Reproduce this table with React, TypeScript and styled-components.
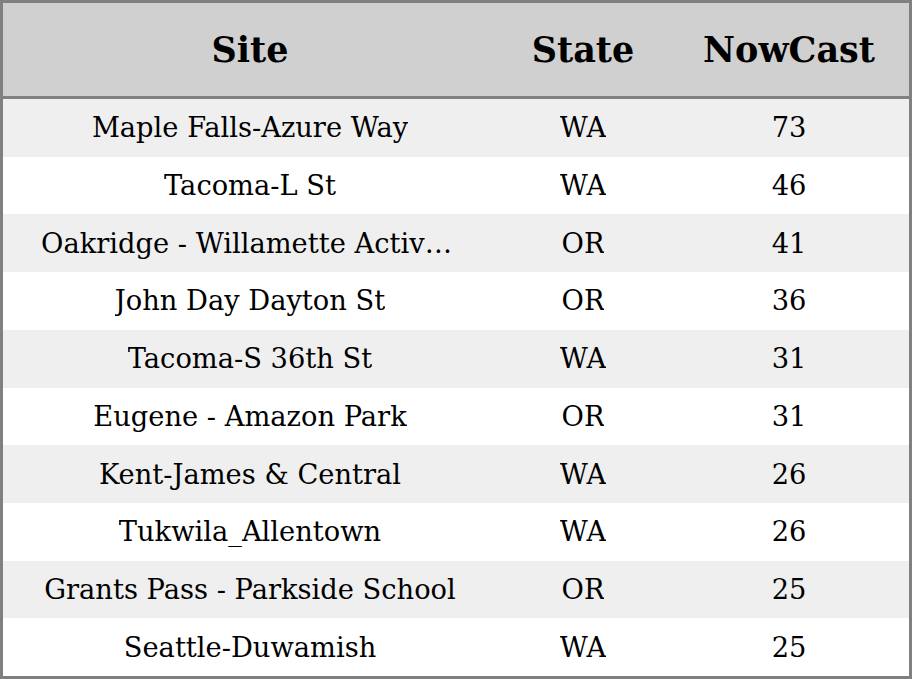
import * as React from "react";
import styled, { createGlobalStyle } from "styled-components";

const GlobalStyle = createGlobalStyle`
  html, body {
    margin: 0;
    padding: 0;
    background: #ffffff;
  }
  * {
    box-sizing: border-box;
  }
`;

const Table = styled.div`
  width: 912px;
  height: 679px;
  border: 3px solid #808080;
  display: grid;
  grid-template-columns: 494px 172px 1fr;
  grid-template-rows: 96px repeat(10, 1fr);
  font-family: "DejaVu Serif", "Liberation Serif", serif;
  color: #000;
  overflow: hidden;
`;

const HeadCell = styled.div`
  background: #d0d0d0;
  border-bottom: 3px solid #808080;
  font-weight: bold;
  font-size: 35px;
  display: flex;
  align-items: center;
  justify-content: center;
`;

const Cell = styled.div<{ striped: boolean; pad?: number }>`
  background: ${p => (p.striped ? "#efefef" : "#ffffff")};
  font-size: 27.3px;
  display: flex;
  align-items: center;
  justify-content: center;
  padding: 0 ${p => (p.pad ?? 12)}px;
  min-width: 0;
`;

const CellText = styled.span`
  white-space: nowrap;
  overflow: hidden;
  text-overflow: ellipsis;
  max-width: 100%;
`;

interface IRow {
  site: string;
  state: string;
  nowcast: number;
}

const rows: IRow[] = [
  { site: "Maple Falls-Azure Way", state: "WA", nowcast: 73 },
  { site: "Tacoma-L St", state: "WA", nowcast: 46 },
  { site: "Oakridge - Willamette Activity Center", state: "OR", nowcast: 41 },
  { site: "John Day Dayton St", state: "OR", nowcast: 36 },
  { site: "Tacoma-S 36th St", state: "WA", nowcast: 31 },
  { site: "Eugene - Amazon Park", state: "OR", nowcast: 31 },
  { site: "Kent-James & Central", state: "WA", nowcast: 26 },
  { site: "Tukwila_Allentown", state: "WA", nowcast: 26 },
  { site: "Grants Pass - Parkside School", state: "OR", nowcast: 25 },
  { site: "Seattle-Duwamish", state: "WA", nowcast: 25 },
];

export default function App() {
  return (
    <>
      <GlobalStyle />
      <Table>
        <HeadCell>Site</HeadCell>
        <HeadCell>State</HeadCell>
        <HeadCell>NowCast</HeadCell>
        {rows.map((r, i) => (
          <React.Fragment key={r.site}>
            <Cell striped={i % 2 == 0} pad={38}>
              <CellText>{r.site}</CellText>
            </Cell>
            <Cell striped={i % 2 == 0}>
              <CellText>{r.state}</CellText>
            </Cell>
            <Cell striped={i % 2 == 0}>
              <CellText>{r.nowcast}</CellText>
            </Cell>
          </React.Fragment>
        ))}
      </Table>
    </>
  );
}
